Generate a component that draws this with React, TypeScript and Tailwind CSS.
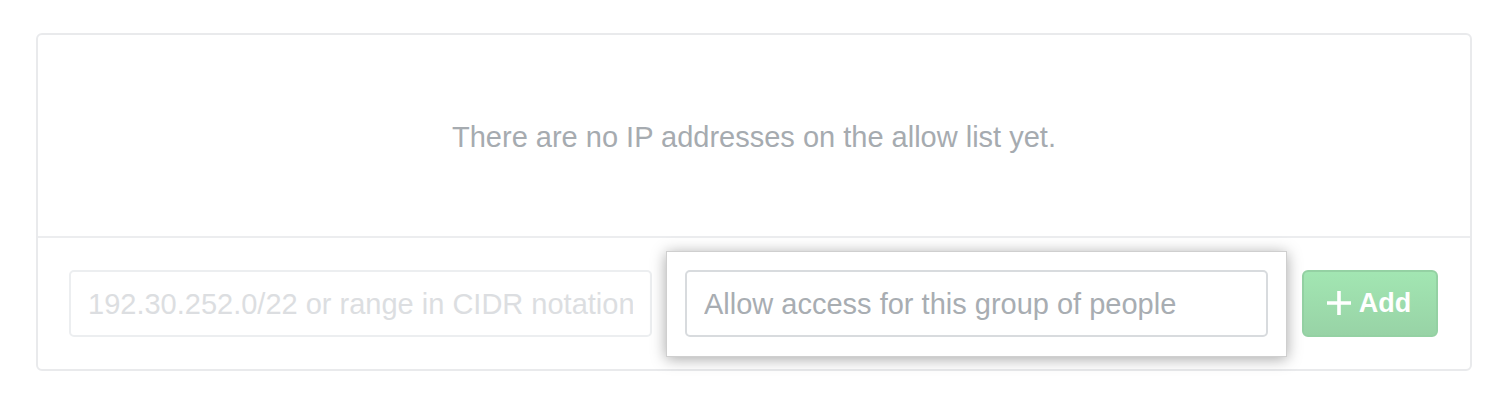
export default function App() {
    return (
        <div className="min-h-[408px] w-full bg-white pl-[36px] pr-[39px] pt-[33px] font-['Liberation_Sans',Arial,sans-serif]">
            <div className="rounded-[6px] border-2 border-[#e9eaec]">
                {/* Empty state */}
                <div className="flex h-[201px] items-center justify-center">
                    <p className="mt-[4px] text-[29px] text-[#a6abb0]">There are no IP addresses on the allow list yet.</p>
                </div>

                {/* Add form */}
                <div className="flex items-center gap-[33px] border-t-2 border-[#ecedef] px-[31px] pb-[32px] pt-[32px]">
                    <input
                        type="text"
                        disabled
                        placeholder="192.30.252.0/22 or range in CIDR notation"
                        className="h-[67px] w-[583px] rounded-[5px] border-2 border-[#eceef0] bg-white px-[17px] pt-[1px] text-[29px] placeholder:text-[#dcdee1]"
                    />
                    <div className="relative">
                        <div className="absolute -inset-[19px] -bottom-[20px] border border-[#cfcfcf] bg-white shadow-[0_2px_14px_rgba(0,0,0,0.35)]" />
                        <input
                            type="text"
                            placeholder="Allow access for this group of people"
                            className="relative h-[67px] w-[583px] rounded-[5px] border-2 border-[#d8dbde] bg-white px-[17px] pt-[1px] text-[29px] placeholder:text-[#a8adb2]"
                        />
                    </div>
                    <button
                        type="button"
                        className="ml-[1px] flex h-[67px] w-[136px] items-center justify-center gap-[8px] rounded-[6px] border-2 border-[#94d1a3] bg-linear-to-b from-[#a2e6b2] to-[#98d3a6] pr-[2px] text-[27px] font-bold text-white"
                    >
                        <svg width="24" height="24" viewBox="0 0 24 24" className="mb-[1px]" aria-hidden="true">
                            <path d="M12 0v24M0 12h24" stroke="currentColor" strokeWidth="3.6" />
                        </svg>
                        Add
                    </button>
                </div>
            </div>
        </div>
    );
}
